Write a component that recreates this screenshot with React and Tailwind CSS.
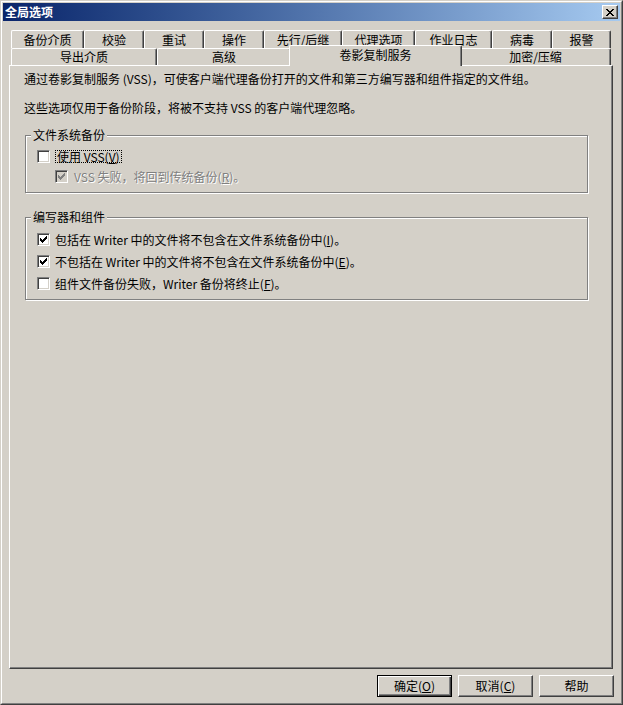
import React from 'react';

const topTabs = [
  { label: '备份介质', w: 'w-[73px]' },
  { label: '校验', w: 'w-[60px]' },
  { label: '重试', w: 'w-[60px]' },
  { label: '操作', w: 'w-[60px]' },
  { label: '先行/后继', w: 'w-[78px]' },
  { label: '代理选项', w: 'w-[73px]' },
  { label: '作业日志', w: 'w-[77px]' },
  { label: '病毒', w: 'w-[60px]' },
  { label: '报警', w: 'w-[59px]' },
];

const tabBase =
  'flex items-center justify-center rounded-t-[2px] border-t border-l border-r border-t-white border-l-white border-r-[#404040] shadow-[inset_-1px_0_0_#808080] whitespace-nowrap leading-[12px]';

function Tab({ label, w }) {
  return (
    <div className={`${tabBase} ${w}`}>
      <span>{label}</span>
    </div>
  );
}

function CheckMark({ color }) {
  return (
    <svg width="7" height="7" viewBox="0 0 7 7" className="ml-[2px] mt-[2px]" shapeRendering="crispEdges">
      <path
        fill={color}
        d="M6 0h1v1h-1z M5 1h2v1h-2z M0 2h1v1h-1z M4 2h3v1h-3z M0 3h2v1h-2z M3 3h3v1h-3z M0 4h5v1h-5z M1 5h3v1h-3z M2 6h1v1h-1z"
      />
    </svg>
  );
}

function Check({ checked, disabled }) {
  return (
    <span
      className={`flex h-[13px] w-[13px] shrink-0 border border-t-[#808080] border-l-[#808080] border-b-white border-r-white shadow-[inset_1px_1px_0_#404040,inset_-1px_-1px_0_#d4d0c8] ${
        disabled ? 'bg-[#d4d0c8]' : 'bg-white'
      }`}
    >
      {checked && <CheckMark color={disabled ? '#808080' : '#000'} />}
    </span>
  );
}

function Group({ title, className, children }) {
  return (
    <fieldset
      className={`ml-px w-[563px] border border-[#808080] shadow-[inset_1px_1px_0_#fff,1px_1px_0_#fff] ${className}`}
    >
      <legend className="ml-[5px] px-[2px] leading-[16px] bg-[#d4d0c8]">{title}</legend>
      {children}
    </fieldset>
  );
}

function Button({ children, isDefault }) {
  return (
    <button
      className={`flex h-[22px] w-[75px] items-center justify-center bg-[#d4d0c8] ${
        isDefault
          ? 'border border-black shadow-[inset_1px_1px_0_#fff,inset_-1px_-1px_0_#404040,inset_-2px_-2px_0_#808080]'
          : 'border border-t-white border-l-white border-b-[#404040] border-r-[#404040] shadow-[inset_-1px_-1px_0_#808080]'
      }`}
    >
      {children}
    </button>
  );
}

export default function App() {
  return (
    <div className="h-[705px] w-[623px] border border-t-[#d4d0c8] border-l-[#d4d0c8] border-b-[#404040] border-r-[#404040] bg-[#d4d0c8] font-['Noto_Sans_CJK_SC','Liberation_Sans',sans-serif] text-[12px] text-black">
      <div className="flex h-full flex-col border border-t-white border-l-white border-b-[#808080] border-r-[#808080] p-px">
        {/* title bar */}
        <div className="flex h-[18px] shrink-0 items-center justify-between bg-linear-to-r from-[#0a246a] to-[#a6caf0] pl-[2px] pr-[2px]">
          <span className="font-bold text-white leading-none">全局选项</span>
          <button className="flex h-[14px] w-[16px] items-center justify-center border border-t-white border-l-white border-b-[#404040] border-r-[#404040] bg-[#d4d0c8] shadow-[inset_-1px_-1px_0_#808080]">
            <svg width="8" height="7" viewBox="0 0 8 7" shapeRendering="crispEdges" className="mt-px">
              <path
                fill="#000"
                d="M0 0h2v1H0z M6 0h2v1H6z M1 1h2v1H1z M5 1h2v1H5z M2 2h4v1H2z M3 3h2v1H3z M2 4h4v1H2z M1 5h2v1H1z M5 5h2v1H5z M0 6h2v1H0z M6 6h2v1H6z"
              />
            </svg>
          </button>
        </div>

        {/* tab control */}
        <div className="ml-[6px] mt-[9px] w-[604px]">
          <div className="flex h-[18px] pl-[2px]">
            {topTabs.map((t) => (
              <Tab key={t.label} label={t.label} w={t.w} />
            ))}
          </div>
          <div className="flex h-[17px] pl-[2px]">
            <Tab label="导出介质" w="w-[146px]" />
            <Tab label="高级" w="w-[134px]" />
            <div className={`${tabBase} relative z-10 -mx-[2px] -mt-[3px] -mb-px w-[173px] bg-[#d4d0c8] pb-[3px]`}>
              <span>卷影复制服务</span>
            </div>
            <Tab label="加密/压缩" w="w-[151px]" />
          </div>

          <div className="h-[604px] border border-t-white border-l-white border-b-[#404040] border-r-[#404040] pl-[14px] pt-[5px] shadow-[inset_-1px_-1px_0_#808080]">
            <p className="leading-[16px]">通过卷影复制服务 (VSS)，可使客户端代理备份打开的文件和第三方编写器和组件指定的文件组。</p>
            <p className="mt-[13px] leading-[16px]">这些选项仅用于备份阶段，将被不支持 VSS 的客户端代理忽略。</p>

            <Group title="文件系统备份" className="mt-[11px]">
              <div className="flex flex-col gap-[7px] pb-[9px] pl-[11px] pt-[7px]">
                <label className="flex h-[13px] items-center gap-[5px]">
                  <Check />
                  <span className="border border-dotted border-black px-px leading-[11px]">
                    使用 VSS(<u>V</u>)
                  </span>
                </label>
                <label className="ml-[18px] flex h-[13px] items-center gap-[6px] text-[#808080] [text-shadow:1px_1px_0_#fff]">
                  <Check checked disabled />
                  <span>VSS 失败，将回到传统备份(<u>R</u>)。</span>
                </label>
              </div>
            </Group>

            <Group title="编写器和组件" className="mt-[16px]">
              <div className="flex flex-col gap-[9px] pb-[9px] pl-[11px] pt-[8px]">
                <label className="flex h-[13px] items-center gap-[5px]">
                  <Check checked />
                  <span>包括在 Writer 中的文件将不包含在文件系统备份中(<u>I</u>)。</span>
                </label>
                <label className="flex h-[13px] items-center gap-[5px]">
                  <Check checked />
                  <span>不包括在 Writer 中的文件将不包含在文件系统备份中(<u>E</u>)。</span>
                </label>
                <label className="flex h-[13px] items-center gap-[5px]">
                  <Check />
                  <span>组件文件备份失败，Writer 备份将终止(<u>F</u>)。</span>
                </label>
              </div>
            </Group>
          </div>
        </div>

        {/* buttons */}
        <div className="mt-[6px] flex justify-end gap-[6px] pr-[6px]">
          <Button isDefault>
            确定(<u>O</u>)
          </Button>
          <Button>
            取消(<u>C</u>)
          </Button>
          <Button>帮助</Button>
        </div>
      </div>
    </div>
  );
}
